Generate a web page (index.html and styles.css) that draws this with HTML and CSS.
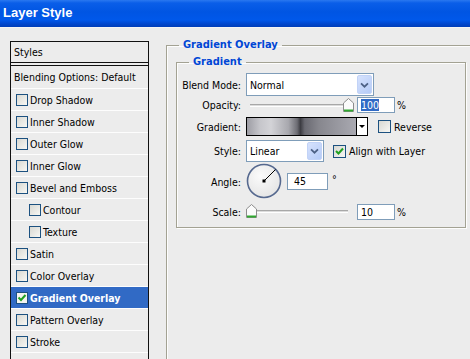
FILE: index.html
```html
<!DOCTYPE html>
<html lang="en">
<head>
    <meta charset="UTF-8">
    <meta name="viewport" content="width=device-width, initial-scale=1.0">
    <title>Layer Style</title>
    <link rel="stylesheet" href="styles.css">
</head>
<body>
    <div class="titlebar">Layer Style</div>

    <div class="dialog">
        <div class="styles-list">
            <div class="list-head">Styles</div>
            <div class="list-blend">Blending Options: Default</div>
            <div class="list-item"><span class="check"></span>Drop Shadow</div>
            <div class="list-item"><span class="check"></span>Inner Shadow</div>
            <div class="list-item"><span class="check"></span>Outer Glow</div>
            <div class="list-item"><span class="check"></span>Inner Glow</div>
            <div class="list-item"><span class="check"></span>Bevel and Emboss</div>
            <div class="list-item sub"><span class="check"></span>Contour</div>
            <div class="list-item sub"><span class="check"></span>Texture</div>
            <div class="list-item"><span class="check"></span>Satin</div>
            <div class="list-item"><span class="check"></span>Color Overlay</div>
            <div class="list-item selected">
                <span class="check">
                    <svg width="10" height="10" viewBox="0 0 10 10"><path d="M1.5 4.5 L4 7 L8.5 2" fill="none" stroke="#21a121" stroke-width="2"/></svg>
                </span>Gradient Overlay
            </div>
            <div class="list-item"><span class="check"></span>Pattern Overlay</div>
            <div class="list-item"><span class="check"></span>Stroke</div>
        </div>

        <fieldset class="group outer">
            <legend>Gradient Overlay</legend>
            <fieldset class="group inner">
                <legend>Gradient</legend>

                <div class="row row-blend">
                    <span class="label">Blend Mode:</span>
                    <div class="combo combo-blend">
                        <span class="combo-text">Normal</span>
                        <span class="combo-btn">
                            <svg width="15" height="18" viewBox="0 0 15 18"><path d="M3.5 7 L7.5 11 L11.5 7" fill="none" stroke="#4d6185" stroke-width="2"/></svg>
                        </span>
                    </div>
                </div>

                <div class="row row-opacity">
                    <span class="label">Opacity:</span>
                    <div class="slider">
                        <span class="track track-start"></span>
                        <span class="thumb">
                            <svg width="11" height="14" viewBox="0 0 11 14"><path d="M0.5 5 L5.5 0.5 L10.5 5 L10.5 13.5 L0.5 13.5 Z" fill="#fbfbfb" stroke="#8c8c8c"/><path d="M1 12.5 H10" stroke="#2fa82f" stroke-width="2"/></svg>
                        </span>
                    </div>
                    <div class="num"><span class="sel">100</span></div>
                    <span class="unit">%</span>
                </div>

                <div class="row row-gradient">
                    <span class="label">Gradient:</span>
                    <div class="swatch">
                        <span class="swatch-fill"></span>
                        <span class="swatch-arrow">
                            <svg width="10" height="17" viewBox="0 0 10 17"><path d="M2 7 H8 L5 10 Z" fill="#000"/></svg>
                        </span>
                    </div>
                    <span class="check big reverse-check"></span>
                    <span class="check-label">Reverse</span>
                </div>

                <div class="row row-style">
                    <span class="label">Style:</span>
                    <div class="combo combo-style">
                        <span class="combo-text">Linear</span>
                        <span class="combo-btn">
                            <svg width="15" height="18" viewBox="0 0 15 18"><path d="M3.5 7 L7.5 11 L11.5 7" fill="none" stroke="#4d6185" stroke-width="2"/></svg>
                        </span>
                    </div>
                    <span class="check big align-check">
                        <svg width="11" height="11" viewBox="0 0 11 11"><path d="M2 5 L4.5 7.5 L9 2.5" fill="none" stroke="#21a121" stroke-width="2"/></svg>
                    </span>
                    <span class="check-label">Align with Layer</span>
                </div>

                <div class="row row-angle">
                    <span class="label">Angle:</span>
                    <svg class="dial" width="37" height="37" viewBox="0 0 37 37">
                        <defs>
                            <radialGradient id="dialfill" cx="0.4" cy="0.35" r="0.7">
                                <stop offset="0" stop-color="#fbfbfb"/>
                                <stop offset="1" stop-color="#e4e4e4"/>
                            </radialGradient>
                        </defs>
                        <circle cx="18" cy="18" r="16.5" fill="url(#dialfill)" stroke="#56698f" stroke-width="1.6"/>
                        <path d="M18 18 L29.5 6.5" stroke="#000" stroke-width="1"/>
                        <rect x="16.5" y="16.5" width="3" height="3" fill="#000"/>
                    </svg>
                    <div class="num num-angle">45</div>
                    <span class="degree">°</span>
                </div>

                <div class="row row-scale">
                    <span class="label">Scale:</span>
                    <div class="slider">
                        <span class="thumb">
                            <svg width="11" height="14" viewBox="0 0 11 14"><path d="M0.5 5 L5.5 0.5 L10.5 5 L10.5 13.5 L0.5 13.5 Z" fill="#fbfbfb" stroke="#8c8c8c"/><path d="M1 12.5 H10" stroke="#2fa82f" stroke-width="2"/></svg>
                        </span>
                        <span class="track track-end"></span>
                    </div>
                    <div class="num">10</div>
                    <span class="unit">%</span>
                </div>
            </fieldset>
        </fieldset>
    </div>
</body>
</html>
```

FILE: styles.css
```css
html, body {
    margin: 0;
    height: 100%;
    overflow: hidden;
}

body {
    background-color: #ececec;
    font-family: "DejaVu Sans Condensed", "Liberation Sans", sans-serif;
    font-size: 10.5px;
    color: #000;
}

.titlebar {
    height: 27px;
    line-height: 26px;
    padding-left: 3px;
    color: #fff;
    font-family: "Liberation Sans", sans-serif;
    font-size: 13px;
    font-weight: bold;
    background: linear-gradient(#2a78f0 0, #0a5ee8 3px, #0055e3 12px, #0058ea 20px, #0046cc 24px, #003db8 27px);
    border-bottom: 1px solid #f4f4f4;
}

.dialog {
    display: flex;
    align-items: flex-start;
    padding: 10px 0 0 10px;
}

/* left column */
.styles-list {
    width: 139px;
    height: 325px;
    margin-top: 3px;
    box-sizing: border-box;
    border: 1px solid #111;
    flex-shrink: 0;
}

.list-head {
    height: 20px;
    line-height: 20px;
    padding-left: 3px;
    border-bottom: 1px solid #111;
    margin-bottom: 2px;
}

.list-blend {
    height: 22px;
    line-height: 22px;
    padding-left: 3px;
    border-top: 1px solid #111;
    border-bottom: 1px solid #fdfdfd;
    white-space: nowrap;
}

.list-item {
    display: flex;
    align-items: center;
    height: 21px;
    padding-left: 5px;
    border-bottom: 1px solid #fdfdfd;
    white-space: nowrap;
}

.list-item.sub {
    padding-left: 18px;
}

.list-item.selected {
    background-color: #316ac5;
    color: #fff;
    font-weight: bold;
}

.check {
    display: inline-flex;
    align-items: center;
    justify-content: center;
    width: 12px;
    height: 12px;
    box-sizing: border-box;
    border: 1px solid #1c5180;
    background: linear-gradient(135deg, #d8d8d2, #f7f7f4);
    margin-right: 2px;
    flex-shrink: 0;
}

.selected .check {
    background: #f4f4f0;
}

.check.big {
    width: 13px;
    height: 13px;
}

/* group boxes */
.group {
    border: 1px solid #a3a293;
    box-shadow: inset 1px 1px 0 #fdfdfd, 1px 1px 0 #fdfdfd;
    margin: 0;
    min-width: 0;
}

.group legend {
    color: #0046d5;
    font-weight: bold;
    font-size: 11px;
    line-height: 14px;
    padding: 0 4px;
}

.outer {
    width: 320px;
    height: 325px;
    margin-left: 17px;
    padding: 3px 0 0 9px;
    box-sizing: border-box;
    flex-shrink: 0;
}

.outer > legend {
    margin-left: 3px;
}

.inner {
    width: 290px;
    box-sizing: border-box;
    padding: 0 0 7px 0;
}

.inner > legend {
    margin-left: 12px;
}

/* rows */
.row {
    display: flex;
    align-items: center;
}

.label {
    width: 64px;
    margin-right: 5px;
    text-align: right;
    flex-shrink: 0;
    white-space: nowrap;
}

.row-blend { height: 23px; margin-top: 4px; }
.row-opacity { height: 16px; margin-top: 1px; }
.row-gradient { height: 19px; margin-top: 4px; }
.row-style { height: 22px; margin-top: 4px; }
.row-angle { height: 37px; margin-top: 1px; }
.row-scale { height: 17px; margin-top: 3px; }

.combo {
    display: flex;
    align-items: center;
    height: 100%;
    box-sizing: border-box;
    border: 1px solid #7f9db9;
    background-color: #fff;
    padding: 1px;
}

.combo-blend { width: 128px; }
.combo-style { width: 78px; }

.combo-text {
    flex: 1;
    padding-left: 2px;
}

.combo-btn {
    display: flex;
    align-items: center;
    justify-content: center;
    width: 15px;
    height: 100%;
    border-radius: 2px;
    background: linear-gradient(135deg, #d6e2fd, #b5cbf7);
    border: 1px solid #c2d3f7;
    box-sizing: border-box;
}

.slider {
    display: flex;
    align-items: center;
    width: 108px;
    height: 100%;
}

.track {
    flex: 1;
    height: 1px;
    border-top: 1px solid #a8a8a8;
    border-bottom: 1px solid #fff;
    background-color: #dcdcdc;
}

.track-start {
    margin: 0 0 0 4px;
}

.track-end {
    margin-right: 6px;
}

.thumb {
    display: flex;
    width: 11px;
    height: 14px;
}

.row-scale .thumb {
    margin-top: -1px;
}

.num {
    width: 38px;
    height: 16px;
    line-height: 14px;
    box-sizing: border-box;
    border: 1px solid #7f9db9;
    background-color: #fff;
    padding-left: 3px;
    margin-left: 3px;
}

.sel {
    background-color: #316ac5;
    color: #fff;
}

.num-angle {
    width: 41px;
    height: 17px;
    line-height: 15px;
    margin-left: 4px;
    padding-left: 6px;
}

.unit {
    margin-left: 2px;
}

.degree {
    margin-left: 4px;
    margin-bottom: 6px;
}

.swatch {
    display: flex;
    width: 122px;
    height: 19px;
    box-sizing: border-box;
    border: 1px solid #000;
    background-color: #fff;
}

.swatch-fill {
    flex: 1;
    border-right: 1px solid #000;
    background: linear-gradient(to right, #9d9da4 0%, #c6c6cb 12%, #d3d3d7 22%, #a8a8ae 38%, #6d6d74 46%, #3c3c42 49%, #6a6a72 53%, #87878e 66%, #a9a9b1 100%);
}

.swatch-arrow {
    display: flex;
    width: 10px;
}

.reverse-check {
    margin-left: 10px;
}

.align-check {
    margin-left: 9px;
}

.check-label {
    margin-left: 1px;
}

.dial {
    display: block;
}
```
